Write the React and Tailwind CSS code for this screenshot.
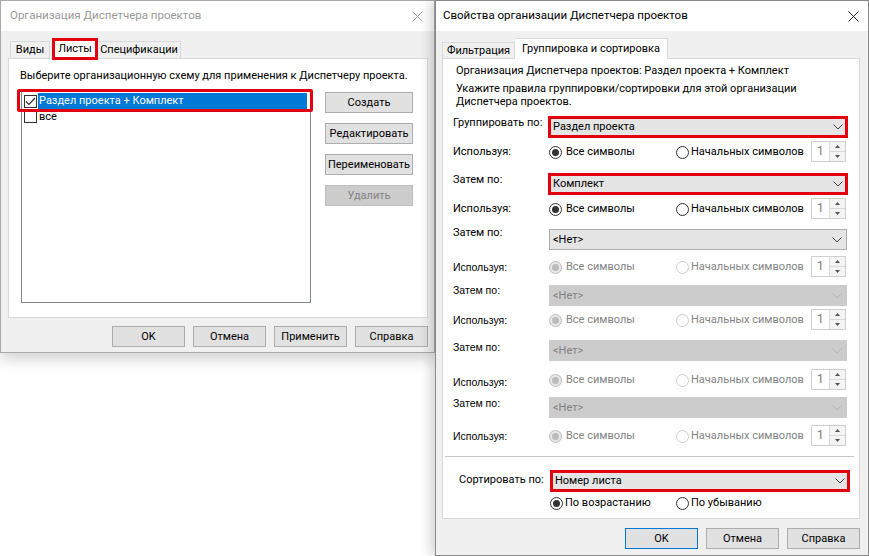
import React from "react";

function CloseX({ color }) {
  return (
    <svg width="11" height="11" viewBox="0 0 11 11">
      <line x1="0.5" y1="0.5" x2="10.5" y2="10.5" stroke={color} strokeWidth="1" />
      <line x1="10.5" y1="0.5" x2="0.5" y2="10.5" stroke={color} strokeWidth="1" />
    </svg>
  );
}

function Chevron({ disabled }) {
  return (
    <svg width="10" height="6" viewBox="0 0 10 6">
      <polyline points="0.5,0.5 5,5 9.5,0.5" fill="none" stroke={disabled ? "#b8b8b8" : "#444"} strokeWidth="1" />
    </svg>
  );
}

function Combo({ text, red, disabled }) {
  const cls = red
    ? "w-[300px] -ml-[1px] h-[22px] border-[3px] border-[#e3000f] bg-[#e5e5e5] pl-[2px] pr-[2px] text-black"
    : disabled
    ? "w-[298px] h-[21px] border border-[#cccccc] bg-[#cccccc] text-[#838383] pl-[3px] pr-[4px]"
    : "w-[298px] h-[21px] border border-[#adadad] bg-[#e5e5e5] pl-[3px] pr-[4px] text-black";
  return (
    <div className={`flex items-center justify-between ${cls}`}>
      <span className="leading-[14px] whitespace-nowrap">{text}</span>
      <Chevron disabled={disabled} />
    </div>
  );
}

function Radio({ checked, disabled }) {
  return (
    <span
      className={`w-[13px] h-[13px] shrink-0 rounded-full border flex items-center justify-center ${
        disabled ? (checked ? "border-[#bcbcbc] bg-[#e8e8e8]" : "border-[#cccccc] bg-white") : "border-[#333333] bg-white"
      }`}
    >
      {checked && <span className={`w-[7px] h-[7px] rounded-full ${disabled ? "bg-[#bcbcbc]" : "bg-[#333333]"}`} />}
    </span>
  );
}

function Spin() {
  return (
    <div className="w-[35px] h-[21px] border border-[#cfcfcf] bg-white flex">
      <div className="flex-1 pl-[5px] text-[#7a7a7a] leading-[19px] text-[12px]">1</div>
      <div className="w-[16px] border-l border-[#dadada] flex flex-col">
        <div className="flex-1 flex items-center justify-center border-b border-[#dadada] bg-[#f4f4f4]">
          <svg width="5" height="3" viewBox="0 0 5 3"><polygon points="0,3 2.5,0 5,3" fill="#555" /></svg>
        </div>
        <div className="flex-1 flex items-center justify-center bg-[#f4f4f4]">
          <svg width="5" height="3" viewBox="0 0 5 3"><polygon points="0,0 5,0 2.5,3" fill="#555" /></svg>
        </div>
      </div>
    </div>
  );
}

function Btn({ children, wide, disabled, focus }) {
  return (
    <div
      className={`h-[21px] flex items-center justify-center border leading-[14px] whitespace-nowrap ${wide ? "w-[88px]" : "w-[73px]"} ${
        disabled
          ? "bg-[#cccccc] border-[#bfbfbf] text-[#838383]"
          : focus
          ? "bg-[#e1e1e1] border-[#0078d7] text-black"
          : "bg-[#e1e1e1] border-[#adadad] text-black"
      }`}
    >
      {children}
    </div>
  );
}

function Check({ checked }) {
  return (
    <span className="w-[13px] h-[13px] shrink-0 border border-[#333333] bg-white flex items-center justify-center">
      {checked && (
        <svg width="11" height="9" viewBox="0 0 11 9">
          <polyline points="1,4.5 4,7.5 10,1" fill="none" stroke="#333" strokeWidth="1.2" />
        </svg>
      )}
    </span>
  );
}

function ComboRow({ mt, lblMt, label, text, red, disabled, lblCls }) {
  return (
    <div className={`flex h-[21px] pl-[10px] ${mt}`}>
      <div className={`w-[96px] leading-[14px] whitespace-nowrap ${lblMt} ${lblCls || ""}`}>{label}</div>
      <Combo text={text} red={red} disabled={disabled} />
    </div>
  );
}

function UsingRow({ mt, lblMt, disabled, lblCls }) {
  const txt = disabled ? "text-[#838383]" : "text-black";
  return (
    <div className={`flex h-[21px] pl-[10px] ${mt}`}>
      <div className={`w-[96px] leading-[14px] whitespace-nowrap ${lblMt} ${lblCls || ""}`}>Используя:</div>
      <div className={`w-[127px] h-[14px] mt-[4px] flex items-center gap-[4px] ${txt}`}>
        <Radio checked disabled={disabled} />
        <span className="leading-[14px] whitespace-nowrap">Все символы</span>
      </div>
      <div className={`w-[135px] h-[14px] mt-[4px] flex items-center gap-[2px] ${txt}`}>
        <Radio disabled={disabled} />
        <span className="leading-[14px] whitespace-nowrap">Начальных символов</span>
      </div>
      <Spin />
    </div>
  );
}

function LeftDialog() {
  return (
    <div className="h-[353px] border border-[#a9a9a9] bg-[#f0f0f0] flex flex-col shadow-[0_6px_14px_rgba(0,0,0,0.18)]">
      <div className="h-[30px] bg-white flex items-center justify-between pl-[9px] pr-[11px] text-[#9a9a9a] text-[11.5px]">
        <span>Организация Диспетчера проектов</span>
        <CloseX color="#9a9a9a" />
      </div>
      <div className="flex-1 flex flex-col pl-[7px] pr-[6px] pt-[7px]">
        <div className="h-[20px] flex items-end pl-[2px] relative z-10">
          <div className="w-[40px] h-[17px] border border-b-0 border-[#d9d9d9] bg-[#f0f0f0] flex items-center justify-center leading-[14px]">Виды</div>
          <div className="ml-[2px] w-[46px] h-[22px] -mb-[2px] border-[3px] border-[#e3000f] bg-white flex items-center justify-center leading-[14px]">Листы</div>
          <div className="w-[83px] h-[17px] border border-b-0 border-l-0 border-[#d9d9d9] bg-[#f0f0f0] flex items-center justify-center leading-[14px]">Спецификации</div>
        </div>
        <div className="h-[260px] border border-[#d9d9d9] bg-white flex flex-col">
          <div className="pl-[11px] mt-[10px] leading-[14px] whitespace-nowrap">Выберите организационную схему для применения к Диспетчеру проекта.</div>
          <div className="flex mt-[6px] pl-[12px]">
            <div className="w-[290px] h-[214px] border border-[#828790] relative pt-[3px] pl-[2px] pr-[3px]">
              <div className="flex items-center h-[16px]">
                <Check checked />
                <div className="ml-[1px] flex-1 h-[16px] bg-[#0078d7] text-white leading-[16px] pl-[1px] whitespace-nowrap">Раздел проекта + Комплект</div>
              </div>
              <div className="flex items-center h-[15px]">
                <Check />
                <div className="ml-[1px] leading-[15px] pl-[1px]">все</div>
              </div>
              <div className="absolute left-[-5px] top-[-1px] w-[296px] h-[23px] border-[3px] border-[#e3000f] rounded-[2px]" />
            </div>
            <div className="ml-[14px] mt-[3px] flex flex-col gap-[10px]">
              <Btn wide>Создать</Btn>
              <Btn wide>Редактировать</Btn>
              <Btn wide>Переименовать</Btn>
              <Btn wide disabled>Удалить</Btn>
            </div>
          </div>
        </div>
        <div className="mt-[8px] flex justify-end gap-[8px]">
          <Btn>OK</Btn>
          <Btn>Отмена</Btn>
          <Btn>Применить</Btn>
          <Btn>Справка</Btn>
        </div>
      </div>
    </div>
  );
}

function RightDialog() {
  const bm = "font-['Liberation_Sans',sans-serif] text-[10.5px]";
  return (
    <div className="w-[434px] h-[556px] border border-[#8a8a8a] bg-[#f0f0f0] flex flex-col relative z-10 shadow-[-5px_0_10px_rgba(0,0,0,0.16)]">
      <div className="h-[30px] bg-white flex items-center justify-between pl-[7px] pr-[9px] text-black text-[11.5px]">
        <span>Свойства организации Диспетчера проектов</span>
        <CloseX color="#222" />
      </div>
      <div className="flex-1 flex flex-col pl-[6px] pr-[8px] pt-[7px]">
        <div className="h-[20px] flex items-end relative z-10">
          <div className="w-[73px] h-[16px] border border-b-0 border-[#d9d9d9] bg-[#f0f0f0] flex items-center justify-center leading-[14px]">Фильтрация</div>
          <div className="w-[153px] h-[21px] -mb-[1px] border border-b-0 border-l-0 border-[#d9d9d9] bg-white flex items-center justify-center leading-[14px] whitespace-nowrap">Группировка и сортировка</div>
        </div>
        <div className="h-[461px] border border-[#d9d9d9] bg-white flex flex-col">
          <div className="pl-[13px] mt-[5px] leading-[13px] whitespace-nowrap">Организация Диспетчера проектов: Раздел проекта + Комплект</div>
          <div className="pl-[13px] mt-[5px] leading-[13px]">
            Укажите правила группировки/сортировки для этой организации
            <br />
            Диспетчера проектов.
          </div>
          <ComboRow mt="mt-[8px]" lblMt="mt-0" label="Группировать по:" text="Раздел проекта" red />
          <UsingRow mt="mt-[4px]" lblMt="mt-[4px]" />
          <ComboRow mt="mt-[11px]" lblMt="mt-0" label="Затем по:" text="Комплект" red />
          <UsingRow mt="mt-[4px]" lblMt="mt-[4px]" />
          <ComboRow mt="mt-[10px]" lblMt="-mt-[3px]" label="Затем по:" text="<Нет>" />
          <UsingRow mt="mt-[6px]" lblMt="mt-[4px]" disabled lblCls={bm} />
          <ComboRow mt="mt-[8px]" lblMt="-mt-[2px]" label="Затем по:" text="<Нет>" disabled lblCls={bm} />
          <UsingRow mt="mt-[3px]" lblMt="mt-[4px]" disabled lblCls={bm} />
          <ComboRow mt="mt-[10px]" lblMt="mt-0" label="Затем по:" text="<Нет>" disabled lblCls={bm} />
          <UsingRow mt="mt-[8px]" lblMt="mt-[6px]" disabled lblCls={bm} />
          <ComboRow mt="mt-[7px]" lblMt="-mt-[1px]" label="Затем по:" text="<Нет>" disabled lblCls={bm} />
          <UsingRow mt="mt-[7px]" lblMt="mt-[4px]" disabled lblCls={bm} />
          <div className="mt-[10px] ml-[2px] mr-[5px] h-px bg-[#c8c8c8]" />
          <div className="flex h-[22px] mt-[13px] pl-[16px]">
            <div className="w-[92px] leading-[14px] mt-[3px] whitespace-nowrap">Сортировать по:</div>
            <Combo text="Номер листа" red />
          </div>
          <div className="flex h-[14px] mt-[4px] pl-[107px]">
            <div className="w-[126px] flex items-center gap-[2px]">
              <Radio checked />
              <span className="leading-[14px]">По возрастанию</span>
            </div>
            <div className="flex items-center gap-[2px]">
              <Radio />
              <span className="leading-[14px]">По убыванию</span>
            </div>
          </div>
        </div>
        <div className="mt-[9px] flex justify-end gap-[8px]">
          <Btn focus>OK</Btn>
          <Btn>Отмена</Btn>
          <Btn>Справка</Btn>
        </div>
      </div>
    </div>
  );
}

export default function App() {
  return (
    <div className="w-[869px] h-[556px] bg-white flex overflow-hidden text-[11px] text-black font-['Roboto',sans-serif]">
      <div className="w-[435px] flex flex-col">
        <LeftDialog />
      </div>
      <RightDialog />
    </div>
  );
}
